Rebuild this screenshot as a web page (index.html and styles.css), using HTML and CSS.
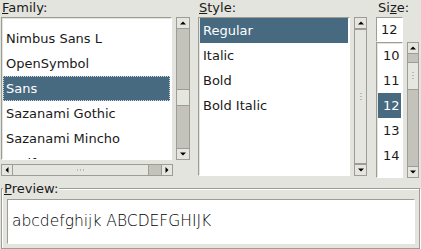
FILE: index.html
```html
<!DOCTYPE html>
<html lang="en">
<head>
    <meta charset="UTF-8">
    <title>Font Selection</title>
    <link rel="stylesheet" href="styles.css">
</head>
<body>
    <div class="dialog">
        <div class="top">
            <div class="col family">
                <div class="label"><u>F</u>amily:</div>
                <div class="listrow">
                    <div class="list">
                        <div class="items shift">
                            <div class="item">Nimbus Sans L</div>
                            <div class="item">OpenSymbol</div>
                            <div class="item selected focus">Sans</div>
                            <div class="item">Sazanami Gothic</div>
                            <div class="item">Sazanami Mincho</div>
                            <div class="item">Serif</div>
                        </div>
                    </div>
                    <div class="vscroll">
                        <div class="btn up"></div>
                        <div class="trough">
                            <div class="thumb fam-thumb"></div>
                        </div>
                        <div class="btn down"></div>
                    </div>
                </div>
                <div class="hscroll">
                    <div class="btn left"></div>
                    <div class="htrough">
                        <div class="hthumb"><span class="hgrip"></span></div>
                    </div>
                    <div class="btn right"></div>
                </div>
            </div>

            <div class="col style">
                <div class="label"><u>S</u>tyle:</div>
                <div class="listrow">
                    <div class="list">
                        <div class="items">
                            <div class="item selected">Regular</div>
                            <div class="item">Italic</div>
                            <div class="item">Bold</div>
                            <div class="item">Bold Italic</div>
                        </div>
                    </div>
                    <div class="vscroll">
                        <div class="btn up"></div>
                        <div class="trough">
                            <div class="thumb full"><span class="grip"></span></div>
                        </div>
                        <div class="btn down"></div>
                    </div>
                </div>
            </div>

            <div class="col size">
                <div class="label">Si<u>z</u>e:</div>
                <div class="entry">12</div>
                <div class="listrow">
                    <div class="list">
                        <div class="items">
                            <div class="item num">10</div>
                            <div class="item num">11</div>
                            <div class="item num selected">12</div>
                            <div class="item num">13</div>
                            <div class="item num">14</div>
                        </div>
                    </div>
                    <div class="vscroll">
                        <div class="btn up"></div>
                        <div class="trough">
                            <div class="thumb size-thumb"><span class="grip"></span></div>
                        </div>
                        <div class="btn down"></div>
                    </div>
                </div>
            </div>
        </div>

        <div class="preview">
            <div class="legend"><u>P</u>review:</div>
            <div class="preview-box">abcdefghijk ABCDEFGHIJK</div>
        </div>
    </div>
</body>
</html>
```

FILE: styles.css
```css
* {
    box-sizing: border-box;
}

body {
    margin: 0;
    background: #e4e4de;
    font-family: "DejaVu Sans", sans-serif;
    font-size: 13px;
    color: #1a1a1a;
}

.dialog {
    width: 421px;
    height: 249px;
    padding: 0 1px 1px 1px;
    display: flex;
    flex-direction: column;
}

.top {
    display: flex;
    gap: 8px;
}

.col {
    display: flex;
    flex-direction: column;
}

.label {
    height: 17px;
    line-height: 16px;
    padding-left: 1px;
}

.family {
    width: 189px;
}

.style {
    width: 169px;
    margin-right: 1px;
}

.size {
    width: 43px;
}

.size .label {
    padding-left: 2px;
}

.listrow {
    display: flex;
    gap: 4px;
}

.family .listrow {
    height: 143px;
}

.style .listrow {
    height: 159px;
}

.size .listrow {
    height: 136px;
}

.list {
    flex: 1;
    background: #fff;
    border: 1px solid #9d9d95;
    border-right-color: #fff;
    border-bottom-color: #fff;
    box-shadow: inset 1px 1px 0 #e4e4de;
    overflow: hidden;
}

.items {
    padding: 0 1px;
}

.items.shift {
    margin-top: 8px;
}

.item {
    height: 25px;
    line-height: 25px;
    padding-left: 3px;
    white-space: nowrap;
}

.item.num {
    padding-left: 5px;
}

.item.selected {
    background: #476a80;
    color: #fff;
}

.item.focus {
    outline: 1px dotted #cfd9df;
    outline-offset: -1px;
}

.vscroll {
    width: 14px;
    display: flex;
    flex-direction: column;
    border: 1px solid #9d9d95;
    background: #c3c3bb;
}

.style .vscroll {
    width: 13px;
}

.size .vscroll {
    width: 12px;
}

.btn {
    height: 12px;
    background: #e6e6e0;
    border: 1px solid #9d9d95;
    margin: -1px;
    position: relative;
}

.btn::after {
    content: "";
    position: absolute;
    left: 50%;
    top: 50%;
    border-left: 3px solid transparent;
    border-right: 3px solid transparent;
    transform: translate(-50%, -50%);
}

.btn.up::after {
    border-bottom: 3px solid #000;
}

.btn.down::after {
    border-top: 3px solid #000;
}

.trough {
    flex: 1;
    position: relative;
    margin-top: 1px;
    margin-bottom: 1px;
}

.thumb {
    position: absolute;
    left: -1px;
    right: -1px;
    background: #e6e6e0;
    border: 1px solid #9d9d95;
}

.fam-thumb {
    top: 60px;
    height: 17px;
}

.thumb.full {
    top: 0;
    bottom: 0;
}

.size-thumb {
    top: 8px;
    height: 28px;
}

.grip {
    position: absolute;
    left: 50%;
    top: 50%;
    width: 1px;
    height: 8px;
    transform: translate(-50%, -50%);
    background: repeating-linear-gradient(#8f8f88 0 1px, transparent 1px 3px);
}

.hscroll {
    margin-top: 4px;
    width: 172px;
    height: 12px;
    display: flex;
    border: 1px solid #9d9d95;
    background: #c3c3bb;
}

.hscroll .btn {
    width: 12px;
    height: 12px;
}

.btn.left::after {
    border: 3px solid transparent;
    border-right: 3px solid #000;
    border-left: 0;
}

.btn.right::after {
    border: 3px solid transparent;
    border-left: 3px solid #000;
    border-right: 0;
}

.htrough {
    flex: 1;
    position: relative;
    margin: 0 1px;
}

.hthumb {
    position: absolute;
    top: -1px;
    bottom: -1px;
    left: 0;
    width: 136px;
    background: #e6e6e0;
    border: 1px solid #9d9d95;
    border-left: 0;
}

.hgrip {
    position: absolute;
    left: 50%;
    top: 50%;
    width: 8px;
    height: 1px;
    transform: translate(-50%, -50%);
    background: repeating-linear-gradient(90deg, #8f8f88 0 1px, transparent 1px 3px);
}

.entry {
    height: 25px;
    line-height: 24px;
    padding-left: 4px;
    background: #fff;
    border: 1px solid #9d9d95;
    border-right-color: #fff;
    border-bottom-color: #fff;
    margin-right: 16px;
}

.preview {
    margin-top: 10px;
    flex: 1;
    position: relative;
    border: 1px solid #9d9d95;
    box-shadow: inset 1px 1px 0 #fff, 1px 1px 0 #fff;
    padding: 10px 4px 4px 5px;
}

.legend {
    position: absolute;
    top: -8px;
    left: 1px;
    padding: 0 1px 0 1px;
    background: #e4e4de;
    line-height: 15px;
}

.preview-box {
    height: 45px;
    background: #fff;
    border: 1px solid #9d9d95;
    border-right-color: #fff;
    border-bottom-color: #fff;
    font-size: 15.5px;
    font-weight: 300;
    color: #000;
    line-height: 43px;
    padding-left: 4px;
}
```
